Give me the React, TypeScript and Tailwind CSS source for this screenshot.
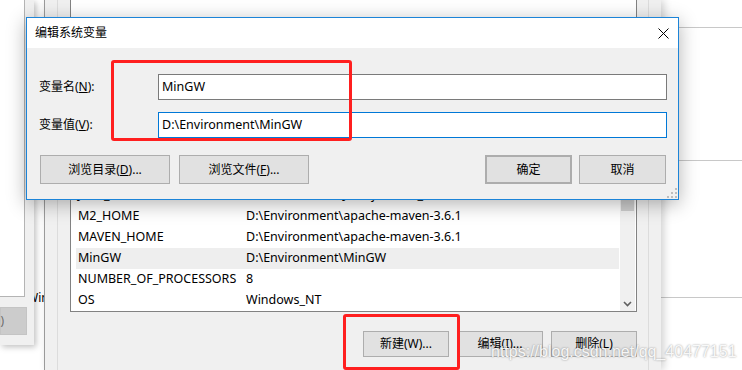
function WinButton({ children, className = "" }: { children: React.ReactNode; className?: string }) {
  return (
    <div className={`flex items-center justify-center bg-[#e1e1e1] border border-[#adadad] ${className}`}>
      {children}
    </div>
  )
}

const rows = [
  { name: "JAVA_HOME", value: "D:\\Environment\\Java\\jdk1.8.0_211" },
  { name: "M2_HOME", value: "D:\\Environment\\apache-maven-3.6.1" },
  { name: "MAVEN_HOME", value: "D:\\Environment\\apache-maven-3.6.1" },
  { name: "MinGW", value: "D:\\Environment\\MinGW", selected: true },
  { name: "NUMBER_OF_PROCESSORS", value: "8" },
  { name: "OS", value: "Windows_NT" },
]

export default function App() {
  return (
    <div className="relative w-[742px] h-[370px] overflow-hidden bg-white font-['Noto_Sans','Noto_Sans_CJK_SC',sans-serif] text-[12px] text-black">
      {/* window far behind, right side */}
      <div className="absolute left-[600px] top-0 w-[142px] flex flex-col">
        <div className="h-[28px] border-b border-[#c8c8c8]" />
        <div className="h-[133px] border-b border-[#c8c8c8]" />
        <div className="h-[137px] border-b border-[#c8c8c8]" />
      </div>

      <div className="absolute left-[27px] top-[289px] leading-[18px]">Win</div>

      {/* environment variables window */}
      <div className="absolute left-[44px] top-0 w-[617px] h-[370px] flex bg-[#f0f0f0] border-l border-[#9a9a9a] px-[12px] shadow-[3px_0_8px_rgba(0,0,0,0.18)]">
        <div className="flex-1 flex flex-col border-x border-[#dcdcdc] pl-[12px] pr-[11px]">
          {/* list */}
          <div className="h-[312px] flex bg-white border-x border-b border-[#828282] pl-[5px] pr-[1px] text-[12.5px]">
            <div className="flex-1 flex flex-col justify-end">
              {rows.map((r) => (
                <div key={r.name} className={`h-[21px] flex items-center ${r.selected ? "bg-[#eeeeee]" : ""}`}>
                  <div className="w-[170px] pl-[2px]">{r.name}</div>
                  <div>{r.value}</div>
                </div>
              ))}
            </div>
            <div className="self-end w-[15px] h-[126px] ml-[1px] flex flex-col justify-between bg-[#f0f0f0]">
              <div className="h-[26px] mx-[1px] bg-[#cdcdcd]" />
              <div className="h-[15px] flex items-center justify-center">
                <svg width="9" height="6" viewBox="0 0 9 6">
                  <path d="M1 1 L4.5 4.5 L8 1" fill="none" stroke="#606060" strokeWidth="1.6" />
                </svg>
              </div>
            </div>
          </div>
          {/* buttons */}
          <div className="mt-[19px] flex justify-end gap-[8px]">
            <WinButton className="w-[86px] h-[26px]">新建(W)...</WinButton>
            <WinButton className="w-[86px] h-[26px]">编辑(I)...</WinButton>
            <WinButton className="w-[86px] h-[26px]">删除(L)</WinButton>
          </div>
        </div>
      </div>

      {/* leftmost window */}
      <div className="absolute left-0 top-0 w-[34px] h-[345px] overflow-hidden bg-[#f0f0f0] shadow-[2px_2px_6px_rgba(0,0,0,0.25)]">
        <div className="w-[25px] h-[297px] bg-white border-r border-b border-[#b4b4b4]" />
        <div className="mt-[10px] w-[27px] h-[28px] flex items-center justify-end pr-[22px] bg-[#cccccc] border border-[#c4c4c4] text-[#6d6d6d] whitespace-nowrap">
          确定(O)
        </div>
      </div>

      {/* edit system variable dialog */}
      <div className="absolute left-[26px] top-[17px] w-[653px] h-[183px] flex flex-col bg-[#f0f0f0] border border-[#1c84d8] shadow-[0_4px_18px_rgba(0,0,0,0.3)]">
        <div className="h-[30px] flex items-center justify-between bg-white pl-[8px]">
          <span>编辑系统变量</span>
          <svg width="11" height="11" viewBox="0 0 11 11" className="mr-[9px]">
            <path d="M0.5 0.5 L10.5 10.5 M10.5 0.5 L0.5 10.5" stroke="#000" strokeWidth="1" />
          </svg>
        </div>
        <div className="relative flex-1 flex flex-col">
          <div className="mt-[26px] flex items-center">
            <div className="w-[131px] pl-[12px]">
              变量名(<span className="underline">N</span>):
            </div>
            <div className="flex-1 h-[26px] mr-[11px] flex items-center pl-[3px] bg-white border border-[#7a7a7a] text-[12.5px]">MinGW</div>
          </div>
          <div className="mt-[12px] flex items-center">
            <div className="w-[131px] pl-[12px]">
              变量值(<span className="underline">V</span>):
            </div>
            <div className="flex-1 h-[26px] mr-[11px] flex items-center pl-[3px] bg-white border border-[#0078d7] text-[12.5px]">D:\Environment\MinGW</div>
          </div>
          <div className="mt-[17px] flex items-center pl-[13px] pr-[12px]">
            <WinButton className="w-[130px] h-[29px]">
              浏览目录(<span className="underline">D</span>)...
            </WinButton>
            <WinButton className="ml-[9px] w-[130px] h-[29px]">
              浏览文件(<span className="underline">F</span>)...
            </WinButton>
            <div className="flex-1" />
            <WinButton className="w-[87px] h-[29px] border-2 border-[#0078d7]">确定</WinButton>
            <WinButton className="ml-[7px] w-[87px] h-[29px]">取消</WinButton>
          </div>
          {/* resize grip */}
          <svg width="10" height="10" viewBox="0 0 10 10" className="absolute right-[1px] bottom-[1px]">
            <g fill="#bdbdbd">
              <rect x="8" y="0" width="2" height="2" />
              <rect x="4" y="4" width="2" height="2" />
              <rect x="8" y="4" width="2" height="2" />
              <rect x="0" y="8" width="2" height="2" />
              <rect x="4" y="8" width="2" height="2" />
              <rect x="8" y="8" width="2" height="2" />
            </g>
          </svg>
        </div>
      </div>

      {/* red highlight boxes */}
      <div className="absolute left-[111px] top-[60px] w-[241px] h-[81px] border-[3px] border-[#ff1f1f] rounded-[3px]" />
      <div className="absolute left-[343px] top-[314px] w-[117px] h-[56px] border-[3px] border-[#ff1f1f] rounded-[3px]" />

      {/* watermark */}
      <div className="absolute left-[491px] top-[340px] font-['Liberation_Sans',sans-serif] text-[16px] text-white/90 [text-shadow:0_0_2px_rgba(0,0,0,0.45)]">
        https://blog.csdn.net/qq_40477151
      </div>
    </div>
  )
}
